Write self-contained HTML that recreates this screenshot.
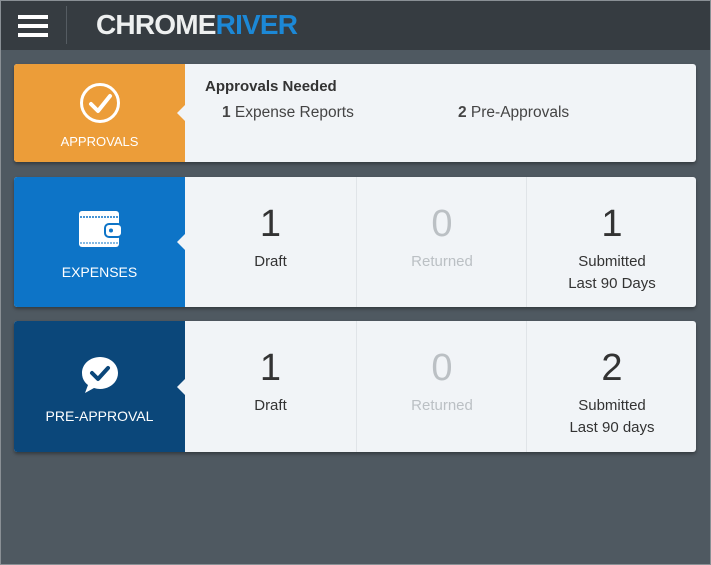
<!DOCTYPE html>
<html><head><style>
*{box-sizing:border-box;margin:0;padding:0}
body{width:711px;height:565px;background:#4f5961;font-family:"Liberation Sans",Arial,sans-serif;position:relative;overflow:hidden}
.frame{position:absolute;left:0;top:0;width:711px;height:565px;border:1px solid #8a9095;z-index:5}
.hdr{position:absolute;left:0;top:0;width:711px;height:50px;background:#363c41}
.ham{position:absolute;left:18px;width:30px;height:4px;background:#fff}
.sep{position:absolute;left:66px;top:6px;width:1px;height:38px;background:#555c62}
.logo{position:absolute;left:96px;top:9px;font-size:28px;font-weight:bold;letter-spacing:-0.8px;color:#eef0f0}
.logo span{color:#1c88d6}
.card{position:absolute;left:14px;width:682px;background:#f1f4f7;border-radius:3px;box-shadow:0 2px 3px rgba(0,0,0,.35);overflow:hidden}
.lp{position:absolute;left:0;top:0;bottom:0;width:171px;color:#fff;text-align:center;font-size:14px}
.lp:after{content:"";position:absolute;right:-1px;top:50%;margin-top:-9px;border:9px solid transparent;border-right-color:#f1f4f7;border-left:0}
.col{position:absolute;top:0;bottom:0;width:171px;text-align:center;color:#333;font-size:15px}
.col b{display:block;font-weight:normal;font-size:38px;margin-top:27px;line-height:40px}
.col p{margin-top:7px;line-height:22px}
.grey{color:#bbc0c4}
.bl{border-left:1px solid #e0e4e8}
</style></head><body>
<div class="frame"></div>
<div class="hdr">
<div class="ham" style="top:15px"></div><div class="ham" style="top:24px"></div><div class="ham" style="top:33px"></div>
<div class="sep"></div>
<div class="logo">CHROME<span>RIVER</span></div>
</div>

<div class="card" style="top:64px;height:98px">
<div class="lp" style="background:#ec9d39">
<svg style="position:absolute;left:65px;top:18px" width="42" height="42" viewBox="0 0 42 42"><circle cx="21" cy="21" r="18.5" fill="none" stroke="#fff" stroke-width="3"/><path d="M12 22l7 7 12-15" fill="none" stroke="#fff" stroke-width="4" stroke-linecap="round" stroke-linejoin="round"/></svg>
<div style="position:absolute;left:0;right:0;top:70px;font-size:13px">APPROVALS</div>
</div>
<div style="position:absolute;left:191px;top:14px;font-weight:bold;font-size:15px;color:#333">Approvals Needed</div>
<div style="position:absolute;left:208px;top:40px;font-size:15.5px;color:#444"><b>1</b> Expense Reports</div>
<div style="position:absolute;left:444px;top:40px;font-size:15.5px;color:#444"><b>2</b> Pre-Approvals</div>
</div>

<div class="card" style="top:177px;height:130px">
<div class="lp" style="background:#0d74c7">
<svg style="position:absolute;left:63px;top:32px" width="46" height="40" viewBox="0 0 46 40"><rect x="2" y="2" width="40" height="36" rx="3" fill="#fff"/><path d="M3 8h39" stroke="#0d74c7" stroke-width="1.5" stroke-dasharray="2 1"/><path d="M3 34h39" stroke="#0d74c7" stroke-width="1" stroke-dasharray="2 1"/><rect x="28" y="15" width="17" height="13" rx="4" fill="#fff" stroke="#0d74c7" stroke-width="2"/><circle cx="34" cy="21.5" r="2" fill="#0d74c7"/></svg>
<div style="position:absolute;left:0;right:0;top:87px;font-size:14px">EXPENSES</div>
</div>
<div class="col" style="left:171px"><b>1</b><p>Draft</p></div>
<div class="col bl grey" style="left:342px"><b>0</b><p>Returned</p></div>
<div class="col bl" style="left:512px"><b>1</b><p>Submitted<br>Last 90 Days</p></div>
</div>

<div class="card" style="top:321px;height:131px">
<div class="lp" style="background:#0b477a">
<svg style="position:absolute;left:66px;top:34px" width="40" height="40" viewBox="0 0 40 40"><path d="M20 2C10 2 2 9 2 18c0 5 2 9 6 12l-3 8 9-5c2 .6 4 1 6 1 10 0 18-7 18-16S30 2 20 2z" fill="#fff"/><path d="M12 18l6 6 10-11" fill="none" stroke="#0b477a" stroke-width="4" stroke-linecap="round" stroke-linejoin="round"/></svg>
<div style="position:absolute;left:0;right:0;top:87px;font-size:14px">PRE-APPROVAL</div>
</div>
<div class="col" style="left:171px"><b>1</b><p>Draft</p></div>
<div class="col bl grey" style="left:342px"><b>0</b><p>Returned</p></div>
<div class="col bl" style="left:512px"><b>2</b><p>Submitted<br>Last 90 days</p></div>
</div>
</body></html>
